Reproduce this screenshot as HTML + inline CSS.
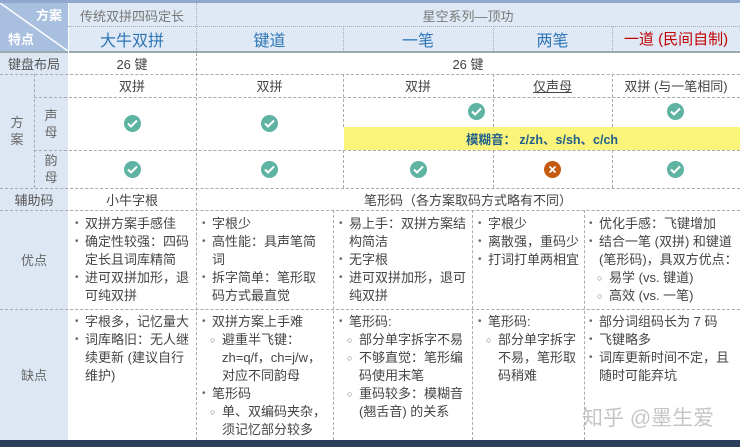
<!DOCTYPE html>
<html><head><meta charset="utf-8"><style>
*{margin:0;padding:0;box-sizing:border-box}
body{width:740px;height:447px;overflow:hidden;background:#fff;font-family:"Liberation Sans","Noto Sans CJK SC",sans-serif;color:#444;font-size:13px;position:relative}
.a{position:absolute}
.c{display:flex;align-items:center;justify-content:center;text-align:center}
.hl{position:absolute;height:0;border-top:1px dashed #aaa}
.vl{position:absolute;width:0;border-left:1px dashed #aaa}
.ok{width:17px;height:17px;border-radius:50%;background:#5fb3a3;display:flex;align-items:center;justify-content:center}
ul{list-style:none}
li{position:relative;padding-left:10px;line-height:18px}
li:before{content:"•";position:absolute;left:0;color:#666;font-size:10px}
li.s{padding-left:20px}
li.s:before{content:"○";left:8px;font-size:9px}
</style></head><body>
<div class="a" style="left:0;top:0;width:740px;height:3px;background:#8fa8d0"></div>
<div class="a" style="left:0;top:3px;width:740px;height:48px;background:#dfe9f5"></div>
<div class="a" style="left:0;top:3px;width:68px;height:48px;background:#a8bfe0"></div>
<svg class="a" style="left:0;top:3px" width="68" height="48"><line x1="0" y1="0" x2="68" y2="48" stroke="#fff" stroke-width="1.5"/></svg>
<div class="a" style="left:36px;top:5px;color:#fff;font-weight:bold;font-size:13px">方案</div>
<div class="a" style="left:8px;top:29px;color:#fff;font-weight:bold;font-size:13px">特点</div>
<div class="a" style="left:0;top:51px;width:740px;height:2px;background:#9aa"></div>
<div class="a" style="left:0;top:53px;width:68px;height:387px;background:#dde7f3"></div>
<div class="a" style="left:68px;top:3px;width:1px;height:437px;background:#fff"></div>
<div class="a" style="left:0;top:440px;width:740px;height:7px;background:#2b3f5c"></div>

<div class="a c" style="left:68px;top:4px;width:128px;height:22px;color:#777;font-size:13px">传统双拼四码定长</div>
<div class="a c" style="left:196px;top:4px;width:544px;height:22px;color:#777;font-size:13px">星空系列—顶功</div>
<div class="hl" style="left:68px;top:26px;width:672px;border-top-style:dotted"></div>
<div class="a c" style="left:68px;top:26px;width:128px;height:25px;color:#2e75b6;font-size:16px">大牛双拼</div>
<div class="a c" style="left:196px;top:26px;width:147px;height:25px;color:#2e75b6;font-size:16px">键道</div>
<div class="a c" style="left:343px;top:26px;width:150px;height:25px;color:#2e75b6;font-size:16px">一笔</div>
<div class="a c" style="left:493px;top:26px;width:119px;height:25px;color:#2e75b6;font-size:16px">两笔</div>
<div class="a c" style="left:612px;top:26px;width:128px;height:25px;color:#c00000;font-size:15px">一道 (民间自制)</div>
<div class="vl" style="left:196px;top:3px;height:48px;border-left-style:dotted"></div>
<div class="vl" style="left:343px;top:26px;height:25px;border-left-style:dotted"></div>
<div class="vl" style="left:493px;top:26px;height:25px;border-left-style:dotted"></div>
<div class="vl" style="left:612px;top:26px;height:25px;border-left-style:dotted"></div>

<div class="a c" style="left:0;top:53px;width:68px;height:21px;font-size:13px;color:#555">键盘布局</div>
<div class="a c" style="left:68px;top:53px;width:128px;height:21px">26 键</div>
<div class="a c" style="left:196px;top:53px;width:544px;height:21px">26 键</div>
<div class="hl" style="left:0;top:74px;width:740px"></div>

<div class="a c" style="left:0;top:74px;width:34px;height:114px;font-size:13px;line-height:17px;color:#666">方<br>案</div>
<div class="vl" style="left:34px;top:74px;height:114px"></div>
<div class="a c" style="left:34px;top:97px;width:34px;height:53px;font-size:13px;line-height:17px;color:#666">声<br>母</div>
<div class="a c" style="left:34px;top:150px;width:34px;height:38px;font-size:13px;line-height:17px;color:#666">韵<br>母</div>
<div class="hl" style="left:34px;top:97px;width:706px"></div>
<div class="hl" style="left:34px;top:150px;width:706px"></div>
<div class="hl" style="left:0;top:188px;width:740px"></div>

<div class="a c" style="left:68px;top:74px;width:128px;height:23px">双拼</div>
<div class="a c" style="left:196px;top:74px;width:147px;height:23px">双拼</div>
<div class="a c" style="left:343px;top:74px;width:150px;height:23px">双拼</div>
<div class="a c" style="left:493px;top:74px;width:119px;height:23px;text-decoration:underline">仅声母</div>
<div class="a c" style="left:612px;top:74px;width:128px;height:23px">双拼 (与一笔相同)</div>

<div class="a" style="left:344px;top:127px;width:396px;height:23px;background:#fbf47a"></div>
<div class="a c" style="left:344px;top:127px;width:396px;height:23px;color:#1f5f8a;font-weight:bold;font-size:12.5px">模糊音： z/zh、s/sh、c/ch</div>

<div class="vl" style="left:196px;top:53px;height:387px"></div>
<div class="vl" style="left:343px;top:74px;height:53px"></div>
<div class="vl" style="left:343px;top:150px;height:38px"></div>
<div class="vl" style="left:493px;top:74px;height:53px"></div>
<div class="vl" style="left:493px;top:150px;height:38px"></div>
<div class="vl" style="left:612px;top:74px;height:53px"></div>
<div class="vl" style="left:612px;top:150px;height:38px"></div>

<div class="a ok" style="left:124px;top:115px"><svg width="11" height="9"><path d="M1 4.5 L4 7.5 L10 1.5" stroke="#fff" stroke-width="2" fill="none"/></svg></div>
<div class="a ok" style="left:261px;top:115px"><svg width="11" height="9"><path d="M1 4.5 L4 7.5 L10 1.5" stroke="#fff" stroke-width="2" fill="none"/></svg></div>
<div class="a ok" style="left:468px;top:103px"><svg width="11" height="9"><path d="M1 4.5 L4 7.5 L10 1.5" stroke="#fff" stroke-width="2" fill="none"/></svg></div>
<div class="a ok" style="left:667px;top:103px"><svg width="11" height="9"><path d="M1 4.5 L4 7.5 L10 1.5" stroke="#fff" stroke-width="2" fill="none"/></svg></div>
<div class="a ok" style="left:124px;top:161px"><svg width="11" height="9"><path d="M1 4.5 L4 7.5 L10 1.5" stroke="#fff" stroke-width="2" fill="none"/></svg></div>
<div class="a ok" style="left:261px;top:161px"><svg width="11" height="9"><path d="M1 4.5 L4 7.5 L10 1.5" stroke="#fff" stroke-width="2" fill="none"/></svg></div>
<div class="a ok" style="left:410px;top:161px"><svg width="11" height="9"><path d="M1 4.5 L4 7.5 L10 1.5" stroke="#fff" stroke-width="2" fill="none"/></svg></div>
<div class="a ok" style="left:544px;top:161px;background:#c55a11"><svg width="9" height="9"><path d="M1.5 1.5 L7.5 7.5 M7.5 1.5 L1.5 7.5" stroke="#fff" stroke-width="1.8"/></svg></div>
<div class="a ok" style="left:667px;top:161px"><svg width="11" height="9"><path d="M1 4.5 L4 7.5 L10 1.5" stroke="#fff" stroke-width="2" fill="none"/></svg></div>

<div class="a c" style="left:0;top:188px;width:68px;height:22px;font-size:13px;color:#555">辅助码</div>
<div class="a c" style="left:68px;top:188px;width:128px;height:22px">小牛字根</div>
<div class="a c" style="left:196px;top:188px;width:544px;height:22px">笔形码（各方案取码方式略有不同）</div>
<div class="hl" style="left:0;top:210px;width:740px"></div>

<div class="a c" style="left:0;top:210px;width:68px;height:99px;font-size:13px;color:#666">优点</div>
<div class="hl" style="left:0;top:309px;width:740px"></div>
<div class="a c" style="left:0;top:309px;width:68px;height:131px;font-size:13px;color:#666">缺点</div>
<div class="vl" style="left:333px;top:210px;height:230px"></div>
<div class="vl" style="left:472px;top:210px;height:230px"></div>
<div class="vl" style="left:584px;top:210px;height:230px"></div>

<ul class="a" style="left:75px;top:215px;width:120px"><li>双拼方案手感佳</li><li>确定性较强：四码定长且词库精简</li><li>进可双拼加形，退可纯双拼</li></ul>
<ul class="a" style="left:202px;top:215px;width:126px"><li>字根少</li><li>高性能：具声笔简词</li><li>拆字简单：笔形取码方式最直觉</li></ul>
<ul class="a" style="left:339px;top:215px;width:134px"><li>易上手：双拼方案结构简洁</li><li>无字根</li><li>进可双拼加形，退可纯双拼</li></ul>
<ul class="a" style="left:478px;top:215px;width:108px"><li>字根少</li><li>离散强，重码少</li><li>打词打单两相宜</li></ul>
<ul class="a" style="left:589px;top:215px;width:153px"><li>优化手感：飞键增加</li><li>结合一笔 (双拼) 和键道 <span style="white-space:nowrap">(笔形码)，具双方优点：</span></li><li class="s">易学 (vs. 键道)</li><li class="s">高效 (vs. 一笔)</li></ul>

<ul class="a" style="left:75px;top:313px;width:120px"><li>字根多，记忆量大</li><li>词库略旧：无人继续更新 (建议自行维护)</li></ul>
<ul class="a" style="left:202px;top:313px;width:126px"><li>双拼方案上手难</li><li class="s">避重半飞键：zh=q/f，ch=j/w，对应不同韵母</li><li>笔形码</li><li class="s">单、双编码夹杂，须记忆部分较多</li></ul>
<ul class="a" style="left:339px;top:313px;width:134px"><li>笔形码:</li><li class="s">部分单字拆字不易</li><li class="s">不够直觉：笔形编码使用末笔</li><li class="s">重码较多：模糊音 (翘舌音) 的关系</li></ul>
<ul class="a" style="left:478px;top:313px;width:108px"><li>笔形码:</li><li class="s">部分单字拆字不易，笔形取码稍难</li></ul>
<ul class="a" style="left:589px;top:313px;width:146px"><li>部分词组码长为 7 码</li><li>飞键略多</li><li>词库更新时间不定，且随时可能弃坑</li></ul>

<div class="a" style="left:582px;top:402px;font-size:21px;color:#bbb;opacity:.85">知乎 @墨生爱</div>
</body></html>
